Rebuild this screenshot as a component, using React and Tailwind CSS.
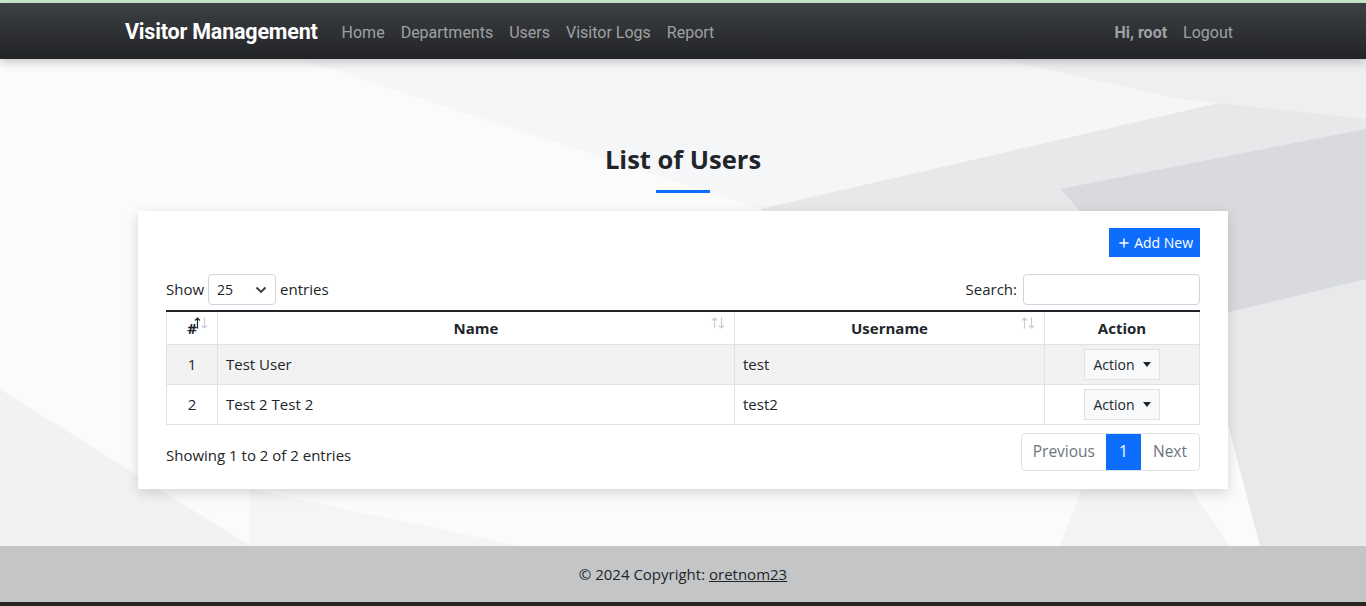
import { Plus } from "lucide-react";

const rows = [
  { id: 1, name: "Test User", username: "test" },
  { id: 2, name: "Test 2 Test 2", username: "test2" },
];

function SortIcon({ active }) {
  return (
    <svg
      className="absolute right-[9px] top-[5px]"
      width="14"
      height="12"
      viewBox="0 0 14 12"
      fill="none"
      strokeWidth="1.2"
    >
      <path d="M3.5 11.5V1 M1 3.5 3.5 1 6 3.5" stroke={active ? "#212529" : "#c9ccd0"} />
      <path d="M10.5 0.5V11 M8 8.5 10.5 11 13 8.5" stroke="#c9ccd0" />
    </svg>
  );
}

function Backdrop() {
  return (
    <svg className="absolute inset-0 h-full w-full" viewBox="0 0 1366 487" preserveAspectRatio="none">
      <rect width="1366" height="487" fill="#fbfbfb" />
      <polygon points="300,0 1366,0 1366,110 760,150" fill="#f5f6f7" />
      <polygon points="760,150 1366,10 1366,200 1050,320" fill="#e6e8ea" />
      <polygon points="1000,0 1366,0 1366,60 1180,40" fill="#eeeff0" />
      <polygon points="1060,130 1366,70 1366,330 1180,260" fill="#d8dadd" />
      <polygon points="1200,260 1366,220 1366,487 1260,487" fill="#e7e9eb" />
      <polygon points="1120,330 1230,487 1060,487" fill="#f2f3f4" />
      <polygon points="0,330 250,487 0,487" fill="#f1f2f3" />
      <polygon points="250,430 520,487 250,487" fill="#f4f5f6" />
    </svg>
  );
}

export default function App() {
  return (
    <div className="flex h-[606px] flex-col bg-[#2a2421] font-['Open_Sans',sans-serif] text-[#212529]">
      <div className="h-[3px] bg-[#c8e6c9]" />
      <nav className="relative z-10 flex h-[56px] shrink-0 items-center bg-gradient-to-b from-[#3e4144] to-[#212326] px-[125px] pt-[3px] shadow-[0_4px_8px_rgba(0,0,0,0.18)] font-['Roboto',sans-serif]">
        <span className="text-[21.5px] font-bold text-white tracking-[-0.2px]">Visitor Management</span>
        <div className="ml-[24px] flex items-center gap-[16px] text-[16px] text-[#9fa1a3]">
          <span>Home</span>
          <span>Departments</span>
          <span>Users</span>
          <span>Visitor Logs</span>
          <span>Report</span>
        </div>
        <div className="ml-auto mr-[8px] flex items-center gap-[16px] text-[16px] text-[#9fa1a3]">
          <span className="font-bold">Hi, root</span>
          <span>Logout</span>
        </div>
      </nav>

      <main className="relative flex-1 overflow-hidden">
        <Backdrop />
        <div className="relative flex flex-col items-center pt-[83px]">
          <h1 className="text-[25.5px] font-bold leading-[35px]">List of Users</h1>
          <div className="mt-[13px] h-[3px] w-[54px] bg-[#0d6efd]" />
          <div className="mt-[18px] w-[1090px] bg-white px-[28px] pt-[17px] pb-[18px] shadow-[0_4px_12px_rgba(0,0,0,0.15)]">
            <div className="flex justify-end">
              <button className="flex h-[29px] items-center gap-[3px] bg-[#0d6efd] pl-[8px] pr-[7px] text-[14px] text-white">
                <Plus size={14} strokeWidth={2.5} />
                Add New
              </button>
            </div>
            <div className="mt-[17px] flex items-center justify-between text-[15px]">
              <div className="flex items-center gap-[4px]">
                <span>Show</span>
                <div className="flex h-[31px] w-[68px] items-center justify-between rounded-[4px] border border-[#ced4da] px-[8px] text-[14px]">
                  <span>25</span>
                  <svg width="12" height="8" viewBox="0 0 12 8" fill="none" stroke="#343a40" strokeWidth="1.8">
                    <path d="M1.5 1.5 6 6 10.5 1.5" />
                  </svg>
                </div>
                <span>entries</span>
              </div>
              <div className="flex items-center gap-[6px]">
                <span>Search:</span>
                <div className="h-[31px] w-[177px] rounded-[4px] border border-[#ced4da]" />
              </div>
            </div>

            <table className="mt-[5px] w-full border-collapse text-[15px]">
              <thead>
                <tr className="border-t-2 border-t-[#212529] font-bold">
                  <th className="relative h-[33px] w-[51px] border border-[#dee2e6] border-t-[#212529] text-center">
                    #
                    <SortIcon active />
                  </th>
                  <th className="relative w-[517px] border border-[#dee2e6] border-t-[#212529] text-center">
                    Name
                    <SortIcon />
                  </th>
                  <th className="relative w-[310px] border border-[#dee2e6] border-t-[#212529] text-center">
                    Username
                    <SortIcon />
                  </th>
                  <th className="border border-[#dee2e6] border-t-[#212529] text-center">Action</th>
                </tr>
              </thead>
              <tbody>
                {rows.map((r, i) => (
                  <tr key={r.id} className={i === 0 ? "bg-[#f2f2f2]" : "bg-white"}>
                    <td className="h-[40px] border border-[#dee2e6] text-center">{r.id}</td>
                    <td className="border border-[#dee2e6] px-[8px]">{r.name}</td>
                    <td className="border border-[#dee2e6] px-[8px]">{r.username}</td>
                    <td className="border border-[#dee2e6] text-center">
                      <button className="inline-flex h-[31px] items-center gap-[8px] border border-[#dee2e6] bg-[#f8f9fa] px-[8px] text-[14px]">
                        Action
                        <span className="h-0 w-0 border-x-[4px] border-t-[5px] border-x-transparent border-t-[#212529]" />
                      </button>
                    </td>
                  </tr>
                ))}
              </tbody>
            </table>

            <div className="mt-[8px] flex items-center justify-between text-[15px]">
              <span className="pt-[8px]">Showing 1 to 2 of 2 entries</span>
              <div className="flex h-[38px] overflow-hidden rounded-[4px] border border-[#dee2e6] text-[15.5px]">
                <span className="flex items-center px-[11px] text-[#6c757d]">Previous</span>
                <span className="flex w-[35px] items-center justify-center bg-[#0d6efd] text-white">1</span>
                <span className="flex items-center px-[12px] text-[#6c757d]">Next</span>
              </div>
            </div>
          </div>
        </div>
      </main>

      <footer className="flex h-[56px] shrink-0 items-center justify-center bg-[#c4c5c7] text-[15px]">
        <span>
          © 2024 Copyright: <span className="underline">oretnom23</span>
        </span>
      </footer>
      <div className="h-[4px] shrink-0 bg-[#2a2421]" />
    </div>
  );
}
